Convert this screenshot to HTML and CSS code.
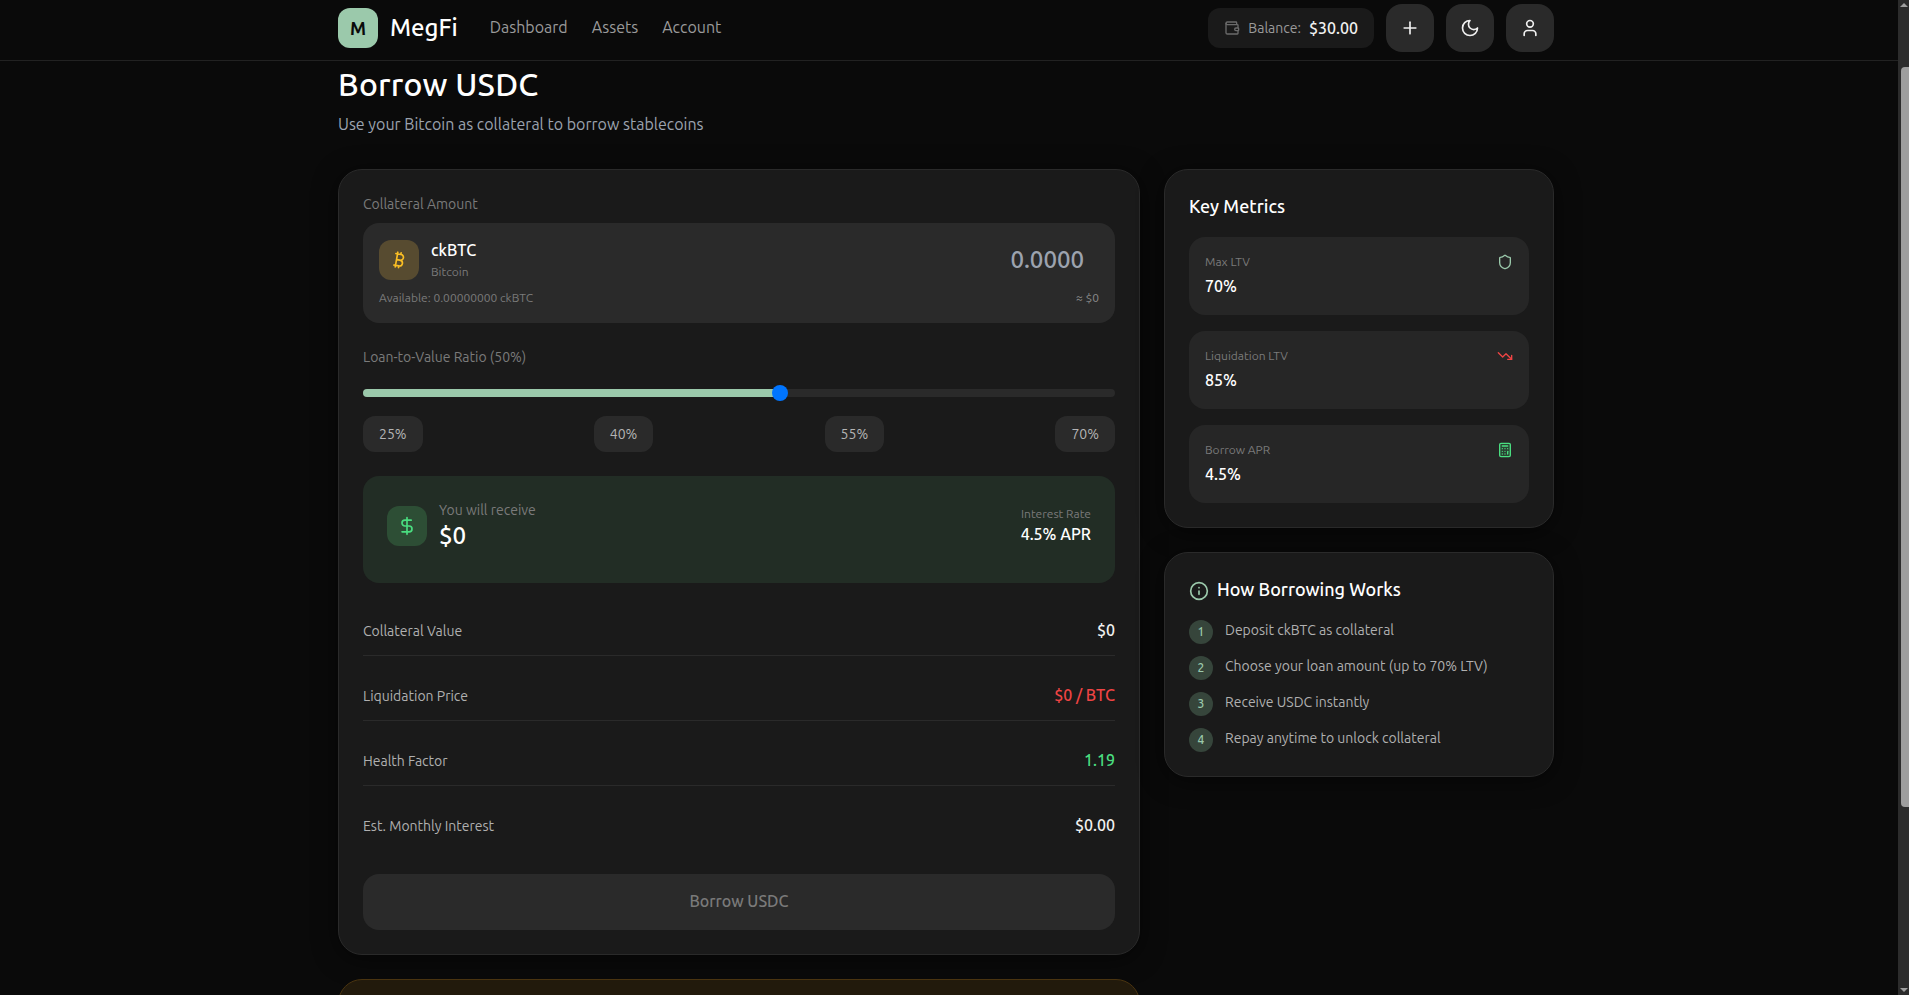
FILE: index.html
```html
<!DOCTYPE html>
<html lang="en">
<head>
    <meta charset="utf-8">
    <title>MegFi - Borrow USDC</title>
    <link rel="stylesheet" href="styles.css">
</head>
<body>
<div class="app">
    <div class="view">
        <header class="topbar">
            <div class="container topbar-inner">
                <div class="brand">
                    <div class="logo">M</div>
                    <span class="brand-name">MegFi</span>
                </div>
                <nav class="nav">
                    <a>Dashboard</a>
                    <a>Assets</a>
                    <a>Account</a>
                </nav>
                <div class="balance">
                    <svg class="icon-16 muted" viewBox="0 0 24 24"><path d="M19 7V4a1 1 0 0 0-1-1H5a2 2 0 0 0 0 4h15a1 1 0 0 1 1 1v4h-3a2 2 0 0 0 0 4h3a1 1 0 0 0 1-1v-2a1 1 0 0 0-1-1"/><path d="M3 5v14a2 2 0 0 0 2 2h15a1 1 0 0 0 1-1v-4"/></svg>
                    <span class="balance-label">Balance:</span>
                    <span class="balance-value">$30.00</span>
                </div>
                <button class="icon-btn"><svg class="icon-20" viewBox="0 0 24 24"><path d="M5 12h14"/><path d="M12 5v14"/></svg></button>
                <button class="icon-btn"><svg class="icon-20" viewBox="0 0 24 24"><path d="M12 3a6 6 0 0 0 9 9 9 9 0 1 1-9-9Z"/></svg></button>
                <button class="icon-btn"><svg class="icon-20" viewBox="0 0 24 24"><path d="M19 21v-2a4 4 0 0 0-4-4H9a4 4 0 0 0-4 4v2"/><circle cx="12" cy="7" r="4"/></svg></button>
            </div>
        </header>

        <main class="container">
            <h1 class="page-title">Borrow USDC</h1>
            <p class="page-sub">Use your Bitcoin as collateral to borrow stablecoins</p>

            <div class="columns">
                <div class="col">
                    <section class="card">
                        <div class="field-label">Collateral Amount</div>
                        <div class="amount-box">
                            <div class="amount-top">
                                <div class="token-icon">
                                    <svg class="icon-20" viewBox="0 0 24 24"><path d="M11.767 19.089c4.924.868 6.14-6.025 1.216-6.894m-1.216 6.894L5.86 18.047m5.908 1.042-.347 1.97m1.563-8.864c4.924.869 6.14-6.025 1.215-6.893m-1.215 6.893-3.94-.694m5.155-6.2L8.29 4.26m5.908 1.042.348-1.97M7.48 20.364l3.126-17.727"/></svg>
                                </div>
                                <div class="token-text">
                                    <div class="token-name">ckBTC</div>
                                    <div class="token-sub">Bitcoin</div>
                                </div>
                                <div class="amount-value">0.0000</div>
                            </div>
                            <div class="amount-foot">
                                <span>Available: 0.00000000 ckBTC</span>
                                <span class="approx">≈ $0</span>
                            </div>
                        </div>

                        <div class="field-label ltv-label">Loan-to-Value Ratio (50%)</div>
                        <div class="slider">
                            <div class="slider-fill"></div>
                            <div class="slider-thumb"></div>
                        </div>
                        <div class="presets">
                            <button class="preset">25%</button>
                            <button class="preset">40%</button>
                            <button class="preset">55%</button>
                            <button class="preset">70%</button>
                        </div>

                        <div class="receive">
                            <div class="receive-icon">
                                <svg class="icon-20" viewBox="0 0 24 24"><line x1="12" x2="12" y1="2" y2="22"/><path d="M17 5H9.5a3.5 3.5 0 0 0 0 7h5a3.5 3.5 0 0 1 0 7H6"/></svg>
                            </div>
                            <div class="receive-text">
                                <div class="receive-label">You will receive</div>
                                <div class="receive-value">$0</div>
                            </div>
                            <div class="receive-rate">
                                <div class="rate-label">Interest Rate</div>
                                <div class="rate-value">4.5% APR</div>
                            </div>
                        </div>

                        <div class="rows">
                            <div class="row"><span>Collateral Value</span><strong>$0</strong></div>
                            <div class="row"><span>Liquidation Price</span><strong class="red">$0 / BTC</strong></div>
                            <div class="row"><span>Health Factor</span><strong class="green">1.19</strong></div>
                            <div class="row last"><span>Est. Monthly Interest</span><strong>$0.00</strong></div>
                        </div>

                        <button class="borrow-btn">Borrow USDC</button>
                    </section>
                    <section class="warning-card"></section>
                </div>

                <div class="col">
                    <section class="card">
                        <h3 class="card-title">Key Metrics</h3>
                        <div class="metrics">
                            <div class="metric">
                                <div class="metric-top">
                                    <span>Max LTV</span>
                                    <svg class="icon-16 sage" viewBox="0 0 24 24"><path d="M20 13c0 5-3.5 7.5-7.66 8.95a1 1 0 0 1-.67-.01C7.5 20.5 4 18 4 13V6a1 1 0 0 1 1-1c2 0 4.5-1.2 6.24-2.72a1.17 1.17 0 0 1 1.52 0C14.51 3.81 17 5 19 5a1 1 0 0 1 1 1z"/></svg>
                                </div>
                                <div class="metric-value">70%</div>
                            </div>
                            <div class="metric">
                                <div class="metric-top">
                                    <span>Liquidation LTV</span>
                                    <svg class="icon-16 red" viewBox="0 0 24 24"><polyline points="22 17 13.5 8.5 8.5 13.5 2 7"/><polyline points="16 17 22 17 22 11"/></svg>
                                </div>
                                <div class="metric-value">85%</div>
                            </div>
                            <div class="metric">
                                <div class="metric-top">
                                    <span>Borrow APR</span>
                                    <svg class="icon-16 green" viewBox="0 0 24 24"><rect class="calc-body" width="16" height="20" x="4" y="2" rx="2"/><line x1="8" x2="16" y1="6" y2="6"/><line x1="16" x2="16" y1="14" y2="18"/><path d="M16 10h.01"/><path d="M12 10h.01"/><path d="M8 10h.01"/><path d="M12 14h.01"/><path d="M8 14h.01"/><path d="M12 18h.01"/><path d="M8 18h.01"/></svg>
                                </div>
                                <div class="metric-value">4.5%</div>
                            </div>
                        </div>
                    </section>

                    <section class="card">
                        <h3 class="card-title how-title">
                            <svg class="icon-20 sage" viewBox="0 0 24 24"><circle cx="12" cy="12" r="10"/><path d="M12 16v-4"/><path d="M12 8h.01"/></svg>
                            How Borrowing Works
                        </h3>
                        <ol class="steps">
                            <li class="step"><span class="step-num">1</span><span>Deposit ckBTC as collateral</span></li>
                            <li class="step"><span class="step-num">2</span><span>Choose your loan amount (up to 70% LTV)</span></li>
                            <li class="step"><span class="step-num">3</span><span>Receive USDC instantly</span></li>
                            <li class="step"><span class="step-num">4</span><span>Repay anytime to unlock collateral</span></li>
                        </ol>
                    </section>
                </div>
            </div>
        </main>
    </div>

    <div class="scrollbar">
        <div class="scroll-arrow up"></div>
        <div class="scroll-thumb"></div>
        <div class="scroll-arrow down"></div>
    </div>
</div>
</body>
</html>
```

FILE: styles.css
```css
* {
    box-sizing: border-box;
}
body {
    margin: 0;
    height: 100vh;
    overflow: hidden;
    background-color: #0a0a0a;
    color: #fff;
    font-family: Ubuntu, "Noto Sans", "Open Sans", sans-serif;
    font-size: 16px;
    line-height: 24px;
}
h1, h3, p, ol {
    margin: 0;
    padding: 0;
}
button {
    font-family: inherit;
    border: 0;
}
svg {
    fill: none;
    stroke: currentColor;
    stroke-width: 2;
    stroke-linecap: round;
    stroke-linejoin: round;
    flex-shrink: 0;
}
.icon-16 {
    width: 16px;
    height: 16px;
}
.icon-20 {
    width: 20px;
    height: 20px;
}
.muted {
    color: #6b6b6b;
}
.sage {
    color: #9bc9ab;
}
.red {
    color: #ef4444;
}
.green {
    color: #4ade80;
}
.calc-body {
    fill: rgba(74, 222, 128, 0.15);
}

.app {
    display: flex;
    height: 995px;
}
.view {
    flex: 1;
    min-width: 0;
    overflow: hidden;
}
.container {
    width: 1216px;
    margin-left: 338px;
}

/* top bar */
.topbar {
    height: 61px;
    border-bottom: 1px solid #222;
}
.topbar-inner {
    display: flex;
    align-items: center;
    height: 56px;
}
.brand {
    display: flex;
    align-items: center;
    gap: 12px;
}
.logo {
    width: 40px;
    height: 40px;
    border-radius: 12px;
    background-color: #9bc9ab;
    color: #0a0a0a;
    font-size: 18px;
    font-weight: 700;
    display: flex;
    align-items: center;
    justify-content: center;
}
.brand-name {
    font-size: 24px;
    font-weight: 500;
}
.nav {
    display: flex;
    gap: 24px;
    margin-left: 32px;
    margin-right: auto;
    padding-bottom: 2px;
    color: #9a9a9a;
}
.balance {
    display: flex;
    align-items: center;
    height: 40px;
    padding: 0 16px;
    border-radius: 12px;
    background-color: #1a1a1a;
    font-size: 14px;
    margin-right: 12px;
}
.balance-label {
    margin-left: 8px;
    color: #9a9a9a;
}
.balance-value {
    margin-left: 8px;
    font-size: 16px;
    font-weight: 500;
    color: #f0f0f0;
}
.icon-btn {
    width: 48px;
    height: 48px;
    border-radius: 16px;
    background-color: #2a2a2a;
    color: #f0f0f0;
    display: flex;
    align-items: center;
    justify-content: center;
    margin-left: 12px;
}
.balance + .icon-btn {
    margin-left: 0;
}

/* heading */
.page-title {
    font-size: 32px;
    line-height: 36px;
    font-weight: 500;
    letter-spacing: 0.2px;
    margin-top: 5px;
}
.page-sub {
    margin-top: 10px;
    color: #9ca3af;
}
.columns {
    display: grid;
    grid-template-columns: 802px 390px;
    gap: 24px;
    margin-top: 33px;
}
.col {
    display: flex;
    flex-direction: column;
    gap: 24px;
    align-items: stretch;
}
.card {
    background-color: #1a1a1a;
    border: 1px solid #2a2a2a;
    border-radius: 24px;
    padding: 24px;
    box-shadow: 0 4px 24px rgba(0, 0, 0, 0.5);
}
.warning-card {
    height: 200px;
    background-color: #221a0c;
    border: 1px solid #4a3410;
    border-radius: 24px;
}

/* collateral */
.field-label {
    font-size: 14px;
    line-height: 20px;
    color: #7a7a7a;
    margin-bottom: 9px;
}
.amount-box {
    height: 100px;
    background-color: #2a2a2a;
    border-radius: 16px;
    padding: 17px 16px 0;
}
.amount-top {
    display: flex;
    align-items: center;
}
.token-icon {
    width: 40px;
    height: 40px;
    border-radius: 12px;
    background-color: #574b30;
    color: #fbbf24;
    display: flex;
    align-items: center;
    justify-content: center;
}
.token-text {
    margin-left: 12px;
}
.token-name {
    font-weight: 500;
    line-height: 20px;
}
.token-sub {
    margin-top: 4px;
    font-size: 12px;
    line-height: 16px;
    color: #7a7a7a;
}
.amount-value {
    margin-left: auto;
    margin-right: 15px;
    font-size: 24px;
    font-weight: 500;
    color: #9ca3af;
}
.amount-foot {
    display: flex;
    justify-content: space-between;
    margin-top: 10px;
    font-size: 12px;
    line-height: 16px;
    color: #7a7a7a;
}
.approx {
    color: #8a8a8a;
}
.ltv-label {
    margin-top: 24px;
    margin-bottom: 22px;
}
.slider {
    position: relative;
    height: 8px;
    border-radius: 4px;
    background-color: #2a2a2a;
}
.slider-fill {
    width: 417px;
    height: 8px;
    border-radius: 4px;
    background-color: #9bc9ab;
}
.slider-thumb {
    position: absolute;
    left: 409px;
    top: -4px;
    width: 16px;
    height: 16px;
    border-radius: 50%;
    background-color: #0075ff;
}
.presets {
    display: flex;
    justify-content: space-between;
    margin-top: 19px;
}
.preset {
    height: 36px;
    padding: 0 16px 1px;
    border-radius: 12px;
    background-color: #2a2a2a;
    color: #b4b4b4;
    font-size: 14px;
}

/* receive box */
.receive {
    display: flex;
    height: 107px;
    margin-top: 24px;
    padding: 30px 24px 0;
    background-color: #222d25;
    border-radius: 16px;
}
.receive-icon {
    width: 40px;
    height: 40px;
    border-radius: 12px;
    background-color: #2d4e35;
    color: #4ade80;
    display: flex;
    align-items: center;
    justify-content: center;
}
.receive-text {
    margin-left: 12px;
    margin-top: -6px;
}
.receive-label {
    font-size: 14px;
    line-height: 20px;
    color: #7a7a7a;
}
.receive-value {
    font-size: 24px;
    line-height: 32px;
    font-weight: 500;
}
.receive-rate {
    margin-left: auto;
    text-align: right;
}
.rate-label {
    font-size: 12px;
    line-height: 16px;
    color: #7a7a7a;
}
.rate-value {
    line-height: 24px;
    font-weight: 500;
}

/* detail rows */
.rows {
    margin-top: 36px;
    display: flex;
    flex-direction: column;
    gap: 28px;
}
.row {
    display: flex;
    justify-content: space-between;
    align-items: center;
    padding-bottom: 12px;
    border-bottom: 1px solid #2a2a2a;
    font-size: 14px;
    color: #b0b0b0;
}
.row strong {
    font-size: 16px;
    line-height: 22px;
    padding-bottom: 2px;
    font-weight: 500;
    color: #f0f0f0;
}
.row strong.red {
    color: #ef4444;
}
.row strong.green {
    color: #4ade80;
}
.row.last {
    border-bottom: 0;
}
.borrow-btn {
    display: block;
    width: 100%;
    height: 56px;
    margin-top: 24px;
    padding-bottom: 4px;
    border-radius: 16px;
    background-color: #2a2a2a;
    color: #7a7a7a;
    font-size: 16px;
    font-weight: 500;
}

/* key metrics */
.card-title {
    font-size: 18px;
    line-height: 24px;
    font-weight: 500;
}
.metrics {
    display: flex;
    flex-direction: column;
    gap: 16px;
    margin-top: 19px;
}
.metric {
    height: 78px;
    padding: 17px 16px 0;
    border-radius: 16px;
    background-color: #262626;
}
.metric-top {
    display: flex;
    justify-content: space-between;
    align-items: center;
    font-size: 12px;
    line-height: 16px;
    color: #7a7a7a;
}
.metric-value {
    margin-top: 4px;
    font-weight: 500;
}

/* how it works */
.how-title {
    display: flex;
    align-items: flex-start;
    gap: 8px;
}
.how-title svg {
    margin-top: 4px;
}
.steps {
    list-style: none;
    margin-top: 19px;
    display: flex;
    flex-direction: column;
    gap: 12px;
}
.step {
    display: flex;
    gap: 12px;
    font-size: 14px;
    line-height: 20px;
    color: #b0b0b0;
}
.step-num {
    width: 24px;
    height: 24px;
    border-radius: 50%;
    background-color: #36453b;
    color: #9bc9ab;
    font-size: 12px;
    font-weight: 500;
    display: flex;
    align-items: center;
    justify-content: center;
    flex-shrink: 0;
}

/* scrollbar of the window */
.scrollbar {
    width: 11px;
    background-color: #2c2c2c;
    display: flex;
    flex-direction: column;
    align-items: center;
}
.scroll-arrow {
    width: 0;
    height: 0;
    border-left: 4px solid transparent;
    border-right: 4px solid transparent;
}
.scroll-arrow.up {
    margin-top: 3px;
    border-bottom: 4px solid #9e9e9e;
}
.scroll-arrow.down {
    margin-top: auto;
    margin-bottom: 3px;
    border-top: 4px solid #9e9e9e;
}
.scroll-thumb {
    width: 8px;
    height: 740px;
    margin-top: 60px;
    margin-left: 3px;
    border-radius: 4px 0 0 4px;
    background-color: #9e9e9e;
}
```
